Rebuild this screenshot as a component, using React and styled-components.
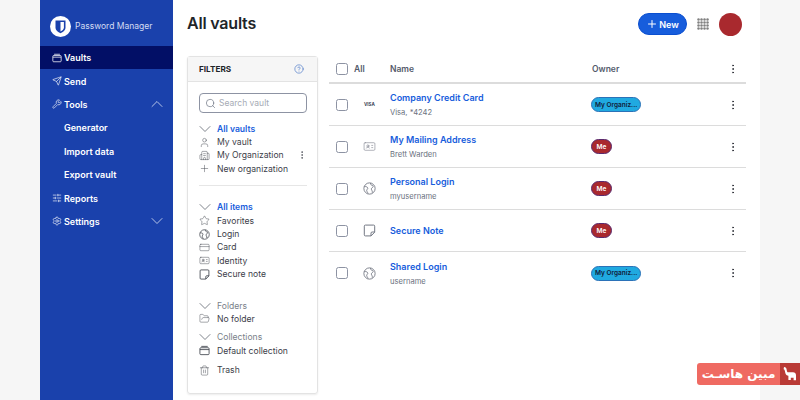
import React from 'react';
import styled, { createGlobalStyle } from 'styled-components';
import {
  Send, Wrench, ChevronUp, ChevronDown, Settings, SlidersHorizontal, Search, CircleHelp,
  User, Plus, Star, CreditCard, IdCard, FolderOpen, Trash2,
  EllipsisVertical, Building2,
} from 'lucide-react';

const GlobalStyle = createGlobalStyle`
  html, body { margin: 0; padding: 0; }
  body {
    background: #f6f6f6;
    font-family: Inter, "Noto Sans", "Liberation Sans", sans-serif;
    overflow: hidden;
  }
`;

const Logo = () => (
  <svg width="21" height="21" viewBox="0 0 21 21">
    <circle cx="10.5" cy="10.5" r="10.5" fill="#fff" />
    <path d="M5.5 4.5h10v7c0 3-2.6 4.6-5 5.8-2.4-1.2-5-2.8-5-5.8z" fill="#1a41ac" />
    <path d="M10.5 6v9.6c1.7-.9 3.4-2.1 3.4-4V6z" fill="#fff" />
  </svg>
);

const Elephant = () => (
  <svg width="16" height="16" viewBox="0 0 16 16">
    <path d="M2 1c1.6 0 2.6 1 2.8 3.4.1 1.2.6 1.8 1.2 1.8h5c1.8 0 3 1.2 3 3v5h-2.4v-2.4H8.8V14H6.4V9.8C5 9.6 3.6 8.6 3.2 6.4 2.9 4.6 2.6 3.4 1.6 3.2z" fill="#fff" />
  </svg>
);

// rounded tray with a lid line, used for vaults and collections
const VaultIcon = ({ size = 11, strokeWidth = 0.9 }) => (
  <svg width={size} height={size} viewBox="0 0 12 12" fill="none" stroke="currentColor" strokeWidth={strokeWidth}>
    <rect x="1" y="3" width="10" height="7.5" rx="1" />
    <path d="M1 5h10M2.5 1.5h7" />
  </svg>
);

const LoginIcon = ({ size = 11, color = 'currentColor' }) => (
  <svg width={size} height={size} viewBox="0 0 12 12" fill="none" stroke={color} strokeWidth="0.8">
    <circle cx="6" cy="6" r="5.2" />
    <path d="M1.2 4.2c1.6-.2 3 .4 3.2 1.4s-1 1.2-1 2.2.9 1.4 1.2 2.9" />
    <path d="M7 .9c-.3 1.4.5 1.9 1.5 2.2s1.2 1.3.4 1.9-1.7 1-1 2.2.8 1.6.6 2.7" />
  </svg>
);

const NoteIcon = ({ size = 11, color = 'currentColor' }) => (
  <svg width={size} height={size} viewBox="0 0 12 12" fill="none" stroke={color} strokeWidth="0.9" strokeLinejoin="round">
    <path d="M2.2 1h7.6a1 1 0 0 1 1 1v5.6L7.4 11H2.2a1 1 0 0 1-1-1V2a1 1 0 0 1 1-1z" />
    <path d="M10.8 7.4H8.4a1 1 0 0 0-1 1V11" />
  </svg>
);

const AppGrid = () => (
  <svg width="12" height="12" viewBox="0 0 12 12" fill="#808080">
    {[1.5, 4.5, 7.5, 10.5].flatMap((y) =>
      [1.5, 4.5, 7.5, 10.5].map((x) => <circle key={`${x}-${y}`} cx={x} cy={y} r="1.25" />)
    )}
  </svg>
);

const vaultRows = [
  { Icon: User, label: 'My vault' },
  { Icon: Building2, label: 'My Organization', menu: true },
  { Icon: Plus, label: 'New organization' },
];

const typeRows = [
  { Icon: Star, label: 'Favorites' },
  { Icon: LoginIcon, label: 'Login' },
  { Icon: CreditCard, label: 'Card' },
  { Icon: IdCard, label: 'Identity' },
  { Icon: NoteIcon, label: 'Secure note' },
];

const items = [
  { name: 'Company Credit Card', sub: 'Visa, *4242', type: 'visa', org: true },
  { name: 'My Mailing Address', sub: 'Brett Warden', Icon: IdCard },
  { name: 'Personal Login', sub: 'myusername', Icon: LoginIcon },
  { name: 'Secure Note', Icon: NoteIcon },
  { name: 'Shared Login', sub: 'username', Icon: LoginIcon, org: true },
];

const App = () => (
  <Page>
    <GlobalStyle />
    <Sidebar>
      <Brand>
        <Logo />
        <BrandName>Password Manager</BrandName>
      </Brand>
      <NavItem $active><VaultIcon size={10} />Vaults</NavItem>
      <NavItem><Send size={10} strokeWidth={1.5} />Send</NavItem>
      <NavItem><Wrench size={10} strokeWidth={1.5} />Tools<NavChevron><ChevronUp size={20} strokeWidth={1} /></NavChevron></NavItem>
      <NavItem $sub>Generator</NavItem>
      <NavItem $sub>Import data</NavItem>
      <NavItem $sub>Export vault</NavItem>
      <NavItem><SlidersHorizontal size={10} strokeWidth={1.5} />Reports</NavItem>
      <NavItem><Settings size={10} strokeWidth={1.5} />Settings<NavChevron><ChevronDown size={20} strokeWidth={1} /></NavChevron></NavItem>
    </Sidebar>

    <Main>
      <TopBar>
        <Title>All vaults</Title>
        <TopActions>
          <NewButton><Plus size={12} strokeWidth={2} />New</NewButton>
          <AppGrid />
          <Avatar />
        </TopActions>
      </TopBar>

      <Content>
        <Filters>
          <FiltersHead>
            FILTERS
            <CircleHelp size={10} color="#3f6fc4" strokeWidth={1.5} />
          </FiltersHead>
          <FiltersBody>
            <SearchBox>
              <Search size={11} color="#6b7280" strokeWidth={1.5} />
              Search vault
            </SearchBox>

            <FilterGroup>
              <FilterTitle $link><ChevronDown size={20} strokeWidth={0.9} />All vaults</FilterTitle>
              {vaultRows.map(({ Icon, label, menu }) => (
                <FilterRow key={label}>
                  <Icon size={11} strokeWidth={1} />
                  {label}
                  {menu && <RowMenu><EllipsisVertical size={10} strokeWidth={1.6} /></RowMenu>}
                </FilterRow>
              ))}
            </FilterGroup>

            <Divider />

            <FilterGroup $top={0}>
              <FilterTitle $link><ChevronDown size={20} strokeWidth={0.9} />All items</FilterTitle>
              {typeRows.map(({ Icon, label }) => (
                <FilterRow key={label}><Icon size={11} strokeWidth={1} />{label}</FilterRow>
              ))}
            </FilterGroup>

            <FilterGroup $top={18}>
              <FilterTitle><ChevronDown size={20} strokeWidth={0.9} />Folders</FilterTitle>
              <FilterRow><FolderOpen size={11} strokeWidth={1} />No folder</FilterRow>
            </FilterGroup>

            <FilterGroup $top={5}>
              <FilterTitle><ChevronDown size={20} strokeWidth={0.9} />Collections</FilterTitle>
              <FilterRow><VaultIcon />Default collection</FilterRow>
            </FilterGroup>

            <FilterGroup $top={6}>
              <FilterRow><Trash2 size={11} strokeWidth={1} />Trash</FilterRow>
            </FilterGroup>
          </FiltersBody>
        </Filters>

        <Table>
          <HeadRow>
            <CheckCell><Check /></CheckCell>
            <AllLabel>All</AllLabel>
            <NameCol>Name</NameCol>
            <OwnerCol>Owner</OwnerCol>
            <MenuCell><EllipsisVertical size={12} strokeWidth={1.8} /></MenuCell>
          </HeadRow>
          {items.map(({ name, sub, type, Icon, org }) => (
            <Row key={name}>
              <CheckCell><Check /></CheckCell>
              <IconCell>
                {type === 'visa' ? <VisaMark>VISA</VisaMark> : <Icon size={13} strokeWidth={1} color="#6f7480" />}
              </IconCell>
              <NameCol>
                <ItemName>{name}</ItemName>
                {sub && <ItemSub>{sub}</ItemSub>}
              </NameCol>
              <OwnerCol>
                <Badge $org={org}>{org ? 'My Organiz...' : 'Me'}</Badge>
              </OwnerCol>
              <MenuCell><EllipsisVertical size={12} strokeWidth={1.8} /></MenuCell>
            </Row>
          ))}
        </Table>
      </Content>
    </Main>

    <Watermark>
      <WatermarkText dir="rtl">مبین هاسـت</WatermarkText>
      <WatermarkIcon><Elephant /></WatermarkIcon>
    </Watermark>
  </Page>
);

export default App;

const Page = styled.div`
  position: relative;
  display: flex;
  width: 800px;
  height: 400px;
  padding: 0 40px;
  box-sizing: border-box;
  overflow: hidden;
`;

const Sidebar = styled.nav`
  width: 133px;
  flex-shrink: 0;
  background: #1a41ac;
  color: #fff;
`;

const Brand = styled.div`
  display: flex;
  align-items: center;
  gap: 4px;
  height: 46px;
  padding: 6px 10px 0;
  box-sizing: border-box;
`;

const BrandName = styled.span`
  font-size: 8.5px;
  color: #d4dcf2;
  white-space: nowrap;
`;

const NavItem = styled.div`
  display: flex;
  align-items: center;
  gap: 2px;
  height: 23.4px;
  padding-left: ${(p) => (p.$sub ? '24px' : '12px')};
  padding-right: 6px;
  font-size: 9px;
  font-weight: 600;
  background: ${(p) => (p.$active ? '#020f66' : 'transparent')};
`;

const NavChevron = styled.span`
  display: flex;
  margin-left: auto;
  color: #d4dcf2;
`;

const Main = styled.main`
  flex: 1;
  background: #fff;
  padding: 0 14px;
  min-width: 0;
`;

const TopBar = styled.header`
  display: flex;
  align-items: center;
  justify-content: space-between;
  height: 48px;
`;

const Title = styled.h1`
  margin: 0 0 2px;
  font-size: 16px;
  font-weight: 600;
  color: #212529;
  letter-spacing: -0.2px;
`;

const TopActions = styled.div`
  display: flex;
  align-items: center;
  gap: 10px;
  margin-right: 4px;
`;

const NewButton = styled.button`
  display: flex;
  align-items: center;
  justify-content: center;
  gap: 1px;
  width: 49px;
  height: 22px;
  padding: 0;
  border: 1px solid #0b4fd0;
  border-radius: 11px;
  background: #175ddc;
  color: #fff;
  font: 600 9px Inter, sans-serif;
`;

const Avatar = styled.div`
  width: 23px;
  height: 23px;
  border-radius: 50%;
  background: #a9292e;
`;

const Content = styled.div`
  display: flex;
  align-items: flex-start;
  gap: 11px;
  margin-top: 8px;
`;

const Filters = styled.aside`
  width: 131px;
  height: 338px;
  flex-shrink: 0;
  box-sizing: border-box;
  border: 1px solid #e3e3e3;
  border-radius: 3px;
  box-shadow: 0 1px 2px rgba(0, 0, 0, 0.08);
`;

const FiltersHead = styled.div`
  display: flex;
  align-items: center;
  justify-content: space-between;
  height: 24px;
  padding: 0 13px 0 11px;
  background: #f6f6f6;
  border-bottom: 1px solid #e3e3e3;
  font-size: 8.2px;
  font-weight: 700;
  color: #212529;
`;

const FiltersBody = styled.div`
  padding: 11px 10px 0 11px;
  color: #3c4049;
`;

const SearchBox = styled.div`
  display: flex;
  align-items: center;
  gap: 3px;
  height: 20px;
  padding-left: 5px;
  box-sizing: border-box;
  border: 1px solid #8d93a3;
  border-radius: 4px;
  font-size: 8.5px;
  color: #a6abb5;
`;

const FilterGroup = styled.div`
  margin-top: ${(p) => (p.$top !== undefined ? p.$top : 9)}px;
`;

const FilterRow = styled.div`
  display: flex;
  align-items: center;
  gap: 7px;
  height: 13.4px;
  font-size: 8.6px;
  white-space: nowrap;
  svg { flex-shrink: 0; }
`;

const FilterTitle = styled(FilterRow)`
  gap: 2px;
  font-weight: ${(p) => (p.$link ? 600 : 400)};
  color: ${(p) => (p.$link ? '#175ddc' : '#7a7f8a')};
  svg { color: #555b66; margin-left: -4px; }
`;

const RowMenu = styled.span`
  display: flex;
  margin-left: auto;
`;

const Divider = styled.div`
  height: 1px;
  margin-top: 9px;
  margin-bottom: 15px;
  background: #e6e6e6;
`;

const Table = styled.section`
  flex: 1;
  min-width: 0;
`;

const HeadRow = styled.div`
  display: flex;
  align-items: center;
  height: 28px;
  box-sizing: border-box;
  border-bottom: 2px solid #dcdcdc;
  font-size: 8.5px;
  font-weight: 600;
  color: #535a6b;
`;

const Row = styled(HeadRow)`
  height: 42px;
  font-weight: 400;
  border-bottom-width: 1.5px;
  &:last-child { border-bottom: none; }
`;

const CheckCell = styled.div`
  display: flex;
  width: 25px;
  padding-left: 7px;
  box-sizing: border-box;
  flex-shrink: 0;
`;

const Check = styled.span`
  display: block;
  width: 12px;
  height: 12px;
  box-sizing: border-box;
  border: 1px solid #8d93a3;
  border-radius: 2.5px;
`;

const AllLabel = styled.span`
  width: 36px;
  flex-shrink: 0;
`;

const IconCell = styled.div`
  display: flex;
  justify-content: flex-start;
  padding-left: 9px;
  box-sizing: border-box;
  width: 36px;
  flex-shrink: 0;
`;

const VisaMark = styled.span`
  font-size: 4.5px;
  font-weight: 700;
  color: #3a3f55;
  padding: 3px 1px;
`;

const NameCol = styled.div`
  width: 202px;
  flex-shrink: 0;
`;

const ItemName = styled.div`
  font-size: 9px;
  font-weight: 600;
  color: #175ddc;
  white-space: nowrap;
`;

const ItemSub = styled.div`
  margin-top: 5px;
  font-size: 7.6px;
  color: #6b7280;
  white-space: nowrap;
`;

const OwnerCol = styled.div`
  flex: 1;
  display: flex;
  align-items: center;
`;

const Badge = styled.span`
  display: inline-flex;
  align-items: center;
  justify-content: center;
  height: 15px;
  margin-left: -1px;
  padding: 0 ${(p) => (p.$org ? 3 : 4.5)}px;
  box-sizing: border-box;
  border: 1px solid ${(p) => (p.$org ? '#2b72b8' : '#5a2a6e')};
  border-radius: 8px;
  background: ${(p) => (p.$org ? '#20a9e0' : '#a9292e')};
  color: ${(p) => (p.$org ? '#10203a' : '#fff')};
  font-size: 6.5px;
  font-weight: 600;
  white-space: nowrap;
`;

const MenuCell = styled.div`
  display: flex;
  width: 26px;
  flex-shrink: 0;
  color: #2c2f38;
  justify-content: center;
`;

const Watermark = styled.div`
  position: absolute;
  right: 0;
  top: 363px;
  display: flex;
  height: 22px;
  width: 103px;
`;

const WatermarkText = styled.div`
  flex: 1;
  display: flex;
  align-items: center;
  justify-content: center;
  background: #ef6a62;
  border-radius: 3px 0 0 3px;
  color: #fff;
  font: 700 12px "DejaVu Sans", sans-serif;
  white-space: nowrap;
`;

const WatermarkIcon = styled.div`
  display: flex;
  align-items: center;
  justify-content: center;
  width: 20px;
  background: #b93a36;
`;
